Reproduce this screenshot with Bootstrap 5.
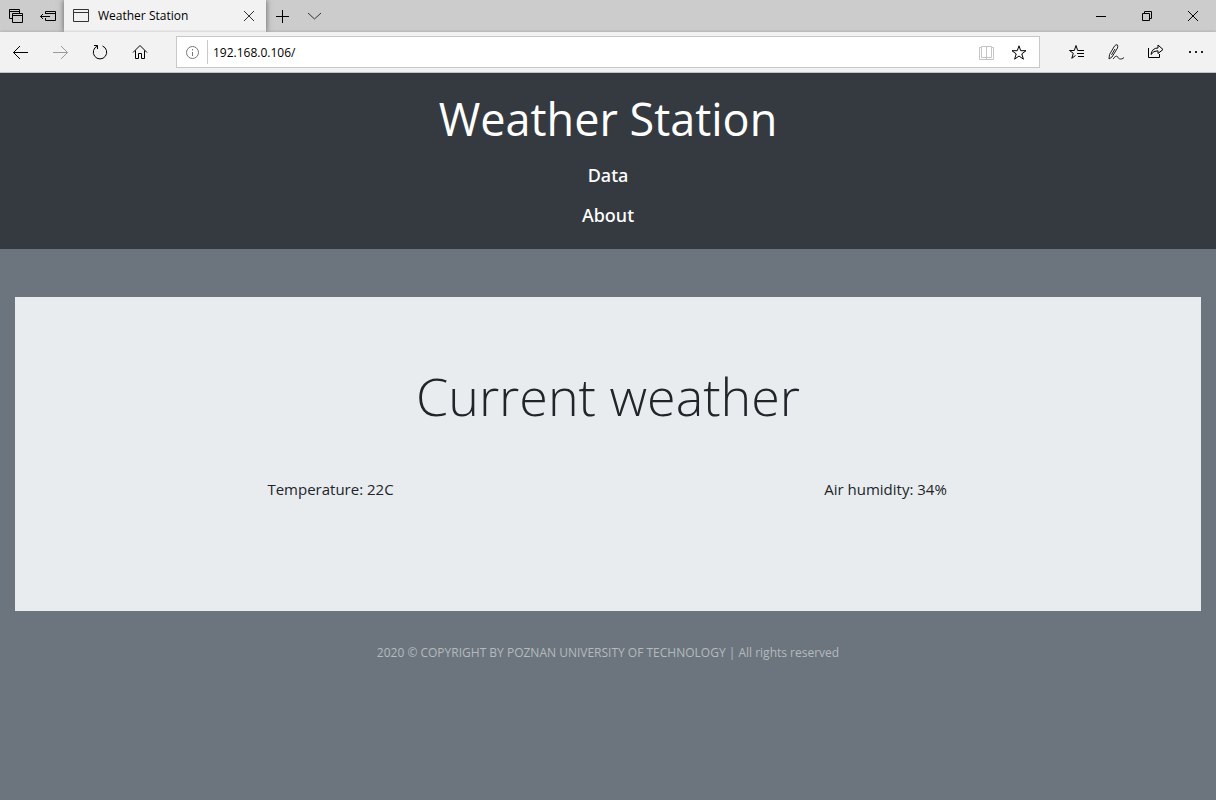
<!DOCTYPE html>
<html lang="en">
<head>
<meta charset="utf-8">
<meta name="viewport" content="width=device-width, initial-scale=1">
<title>Weather Station</title>
<link href="https://cdn.jsdelivr.net/npm/bootstrap@5.3.0/dist/css/bootstrap.min.css" rel="stylesheet">
<style>
  body { font-family: "Open Sans", "Noto Sans", sans-serif; background: #6c757d; color: #212529; }
  svg { display: block; fill: none; stroke: #000; stroke-width: 1; }
  .tabstrip { background: #ccc; height: 32px; overflow: hidden; }
  .tab-open { width: 202px; background: #f2f2f2; box-shadow: 0 0 6px rgba(0,0,0,.55); font-size: 12px; color: #000; }
  .toolbar { position: relative; background: #f2f2f2; border-bottom: 1px solid #c4c4c4; box-shadow: 0 -1px 2px rgba(0,0,0,.12); }
  .icon-btn { border: 0; padding: 0; background: none; flex: none; }
  .address { height: 32px; background: #fff; border: 1px solid #c8c8c8; }
  .divider { width: 1px; height: 24px; background: #c8c8c8; }
  .url { font-size: 12px; border: 0; outline: 0; padding: 1px 5px 0; min-width: 0; color: #000; }
  .site-head { background: #343a40; padding: 17px 16px 14px; }
  .site-title { font-size: 45px; line-height: 58px; margin-bottom: 7px; }
  .site-head .nav-link { font-family: "Noto Sans", sans-serif; font-size: 18px; font-weight: 500; line-height: 24px; color: #fff; }
  .panel { background: #e9ecef; margin: 48px 15px 0; padding: 66px 32px 110px; }
  .panel-title { font-size: 52px; font-weight: 300; line-height: 66px; }
  .readings { max-width: 1110px; font-size: 15px; line-height: 24px; }
  .site-foot { font-size: 12px; line-height: 20px; padding: 32px 16px; color: #b5babe; }
</style>
</head>
<body>
<div class="tabstrip d-flex">
  <button class="icon-btn" aria-label="Tabs set aside"><svg width="32" height="32"><path d="M12 18.500H9.500V9.500H19.500V13M9.500 11.500H19.500M12.500 13.500H22.500V22.500H12.500ZM12.500 15.500H22.500"/></svg></button>
  <button class="icon-btn" aria-label="Set tabs aside"><svg width="32" height="32"><path d="M13.500 14V11.500H23.500V20.500H13.500V18M13.500 13.500H23.500M8.500 16.500H18M11 14L8.500 16.500L11 19"/></svg></button>
  <div class="tab-open d-flex align-items-center">
    <svg class="flex-shrink-0" width="34" height="32" stroke-width="1"><path stroke="#333" d="M9.500 9.500H24.500V21.500H9.500ZM9.500 12.500H24.500"/></svg>
    <span class="flex-grow-1 text-nowrap">Weather Station</span>
    <button class="icon-btn" aria-label="Close tab"><svg width="34" height="32"><path stroke="#333" d="M12 11L22 21M22 11L12 21"/></svg></button>
  </div>
  <button class="icon-btn" aria-label="New tab"><svg width="32" height="32"><path d="M16.500 10V23M10 16.500H23"/></svg></button>
  <button class="icon-btn" aria-label="Tab previews"><svg width="32" height="32"><path stroke="#333" d="M10 13L16.500 19L23 13"/></svg></button>
  <div class="d-flex ms-auto">
    <button class="icon-btn" aria-label="Minimize"><svg width="46" height="32"><path d="M18 16.500H28"/></svg></button>
    <button class="icon-btn" aria-label="Restore"><svg width="46" height="32"><path d="M18.500 13.500H25.500V20.500H18.500ZM20.500 13V11.500H27.500V18.500H26"/></svg></button>
    <button class="icon-btn" aria-label="Close window"><svg width="46" height="32"><path d="M18 11L28 21M28 11L18 21"/></svg></button>
  </div>
</div>
<div class="toolbar d-flex align-items-center">
  <button class="icon-btn" aria-label="Back"><svg width="40" height="40"><path d="M13.500 20.500H28M20 14L13.500 20.500L20 27"/></svg></button>
  <button class="icon-btn" aria-label="Forward" disabled><svg width="40" height="40"><path stroke="#999" d="M13 20.500H27.500M21 14L27.500 20.500L21 27"/></svg></button>
  <button class="icon-btn" aria-label="Refresh"><svg width="40" height="40"><path d="M22.500 14A6.700 6.700 0 1 1 17.500 14M14 13.500H17.500V17"/></svg></button>
  <button class="icon-btn" aria-label="Home"><svg width="40" height="40"><path d="M13 20.500L20 13.500L27 20.500M15.500 18.500V26.500H18.500V21.500H21.500V26.500H24.500V18.500"/></svg></button>
  <div class="address d-flex align-items-center flex-grow-1 mx-3 pe-1">
    <button class="icon-btn" aria-label="Site information"><svg width="30" height="30"><circle cx="15.500" cy="15.500" r="6" stroke="#777"/><path stroke="#777" d="M15.500 15V19M15.500 12V13.500"/></svg></button>
    <span class="divider"></span>
    <input class="url flex-grow-1" type="text" value="192.168.0.106/" aria-label="Address">
    <button class="icon-btn" aria-label="Reading view" disabled><svg width="32" height="30"><path stroke="#c4c4c4" d="M10 10.500H8.500V22.500H22.500V10.500H21M10.500 9.500H20.500V20.500H10.500ZM15.500 10V22"/></svg></button>
    <button class="icon-btn" aria-label="Add to favorites"><svg width="32" height="30"><path d="M16 8.800L17.700 13.700H23L18.800 16.900L20.400 22.200L16 19L11.600 22.200L13.200 16.900L9 13.700H14.300Z"/></svg></button>
  </div>
  <button class="icon-btn" aria-label="Favorites"><svg width="40" height="40"><path d="M28 18.500H21.700L20 13.500L18.300 18.500H13.500L17.300 21.300L15.800 26.300L19.500 23.500"/><path d="M22 18.500H28M21 21.500H28M22 24.500H28"/></svg></button>
  <button class="icon-btn" aria-label="Add notes"><svg width="40" height="40"><path stroke="#222" d="M13 27L13.500 22.500L18.500 14Q20 12 21.500 13Q22 14 21.500 16L16 25L13 27M19 17L15.500 23M17 27C20 23 21.500 24 22 25.500S25.500 28 28 25.500"/></svg></button>
  <button class="icon-btn" aria-label="Share"><svg width="40" height="40"><path d="M12.500 16V25.500H23.500V22M15 22.500Q16 16 22 16V13L27 17.500L22 21.500V18.800Q17.500 18.500 15 22.500Z"/></svg></button>
  <button class="icon-btn" aria-label="More"><svg width="40" height="40"><path stroke="none" fill="#222" d="M13 19h2v2h-2zM19 19h2v2h-2zM25 19h2v2h-2z"/></svg></button>
</div>
<header class="site-head text-center">
  <h1 class="site-title fw-normal text-white">Weather Station</h1>
  <nav class="nav flex-column">
    <a class="nav-link" href="#data">Data</a>
    <a class="nav-link" href="#about">About</a>
  </nav>
</header>
<main class="panel text-center" id="data">
  <h2 class="panel-title mb-5">Current weather</h2>
  <div class="readings row g-0 mx-auto">
    <div class="col-6">Temperature: 22C</div>
    <div class="col-6">Air humidity: 34%</div>
  </div>
</main>
<footer class="site-foot text-center" id="about">2020 © COPYRIGHT BY POZNAN UNIVERSITY OF TECHNOLOGY | All rights reserved</footer>
<script src="https://cdn.jsdelivr.net/npm/bootstrap@5.3.0/dist/js/bootstrap.bundle.min.js"></script>
</body>
</html>
